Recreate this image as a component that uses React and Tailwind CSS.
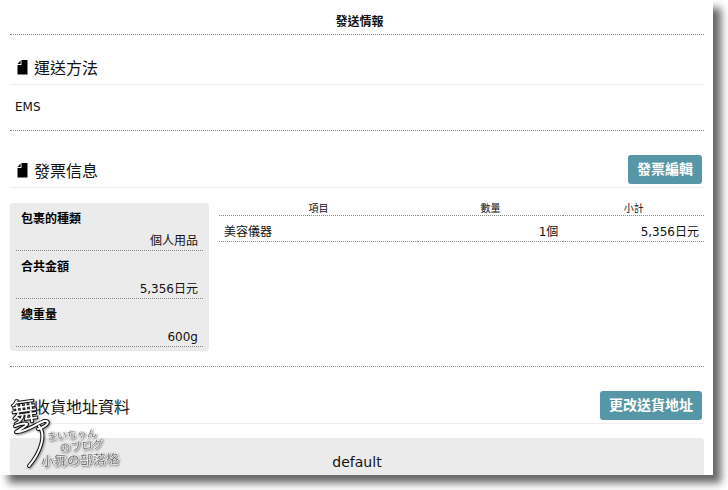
const summary = [
  { label: '包裹的種類', value: '個人用品' },
  { label: '合共金額', value: '5,356日元' },
  { label: '總重量', value: '600g' },
]

const items = [{ name: '美容儀器', count: '1個', subtotal: '5,356日元' }]

function NoteIcon() {
  return (
    <svg viewBox="0 0 11 15" className="w-[11px] h-[15px] shrink-0 mb-1" aria-hidden="true">
      <path d="M4.500 0H10.500V14.500H0.500V5H4.500z" fill="#000" />
      <path d="M3.600 0.500V4H0.500z" fill="#000" />
    </svg>
  )
}

function SectionTitle({ children, action, icon = true }) {
  return (
    <div className="flex items-center justify-between h-[33px] pl-[7px] border-b border-[#eeeeee]">
      <h2 className="flex items-center gap-[6px] pt-[2px] text-[16px] leading-[20px]">
        {icon ? <NoteIcon /> : <span className="w-[11px]" />}
        {children}
      </h2>
      {action}
    </div>
  )
}

function ActionButton({ children }) {
  return (
    <button
      type="button"
      className="shrink-0 h-[29px] px-[9px] mb-[4px] mr-[2px] rounded-[3px] bg-[#5597a6] text-white text-[14px] leading-[20px] font-bold cursor-pointer"
    >
      {children}
    </button>
  )
}

// Handwritten blog signature laid over the address section
function Signature() {
  return (
    <svg
      viewBox="0 0 120 84"
      className="absolute left-[8px] bottom-0 w-[120px] h-[84px] pointer-events-none [filter:drop-shadow(1px_1px_1px_#888888)]"
    >
      <text
        x="3"
        y="30"
        transform="rotate(-8 16 18)"
        fontSize="26"
        fill="#fff"
        stroke="#111"
        strokeWidth="2"
        paintOrder="stroke"
        strokeLinejoin="round"
      >
        舞
      </text>
      {/* brush tail */}
      <g fill="none" strokeLinecap="round" strokeLinejoin="round">
        <path
          d="M7 35C12 33 17 32 19 33C18 36 12 38 8 41C16 42 28 33 36 30C43 29 40 35 30 38M31 35C39 44 32 62 21 75"
          stroke="#111"
          strokeWidth="4"
        />
        <path
          d="M7 35C12 33 17 32 19 33C18 36 12 38 8 41C16 42 28 33 36 30C43 29 40 35 30 38M31 35C39 44 32 62 21 75"
          stroke="#fff"
          strokeWidth="2"
        />
      </g>
      <g fill="#777" stroke="#fff" strokeWidth="1" paintOrder="stroke">
        <text x="39" y="49" fontSize="10" transform="rotate(-4 39 49)">まいちゃん</text>
        <text x="52" y="61" fontSize="11" transform="rotate(-6 52 61)">のブログ</text>
        <text x="33" y="75" fontSize="13" transform="rotate(-2 33 75)">小舞の部落格</text>
      </g>
    </svg>
  )
}

export default function App() {
  return (
    <div className="h-screen overflow-hidden bg-white pr-[15px] pb-[15px] font-['DejaVu_Sans','Noto_Sans_CJK_TC',sans-serif] text-[12px] leading-[18px] text-[#111111]">
      <main className="relative h-full overflow-hidden bg-white pl-[10px] pr-[9px] shadow-[8px_8px_8px_0px_#666666]">
        <h1 className="h-[35px] pt-[13px] pl-[5px] border-b border-dotted border-[#888888] text-center font-bold">
          發送情報
        </h1>

        <section className="pt-[17px] border-b border-dotted border-[#888888]">
          <SectionTitle>運送方法</SectionTitle>
          <p className="px-[5px] pt-[13px] pb-[14px]">EMS</p>
        </section>

        <section className="pt-[24px] pb-[15px] border-b border-dotted border-[#888888]">
          <SectionTitle action={<ActionButton>發票編輯</ActionButton>}>發票信息</SectionTitle>
          <div className="flex items-start gap-[10px] pt-[15px]">
            <dl className="w-[199px] shrink-0 px-[6px] pb-[4px] rounded-[3px] bg-[#ebebeb]">
              {summary.map((row) => (
                <div key={row.label} className="px-[5px] pt-[7px] border-b border-dotted border-[#888888]">
                  <dt className="font-bold text-black">{row.label}</dt>
                  <dd className="pt-[4px] text-right">{row.value}</dd>
                </div>
              ))}
            </dl>
            <table className="grow table-fixed border-collapse">
              <thead>
                <tr className="text-[10px] leading-[12px]">
                  <th className="w-[41%] p-0 border-b border-dotted border-[#888888] font-normal">項目</th>
                  <th className="w-[30%] p-0 border-b border-dotted border-[#888888] font-normal">數量</th>
                  <th className="w-[29%] p-0 border-b border-dotted border-[#888888] font-normal">小計</th>
                </tr>
              </thead>
              <tbody>
                {items.map((item) => (
                  <tr key={item.name} className="border-b border-dotted border-[#888888]">
                    <td className="px-[5px] pt-[7px]">{item.name}</td>
                    <td className="px-[5px] pt-[7px] text-right">{item.count}</td>
                    <td className="px-[5px] pt-[7px] text-right">{item.subtotal}</td>
                  </tr>
                ))}
              </tbody>
            </table>
          </div>
        </section>

        <section className="pt-[24px]">
          <SectionTitle icon={false} action={<ActionButton>更改送貨地址</ActionButton>}>
            收貨地址資料
          </SectionTitle>
          <div className="mt-[14px] py-[14px] rounded-[3px] bg-[#ebebeb] text-center text-[14px] leading-[20px]">
            default
          </div>
        </section>

        <Signature />
      </main>
    </div>
  )
}
